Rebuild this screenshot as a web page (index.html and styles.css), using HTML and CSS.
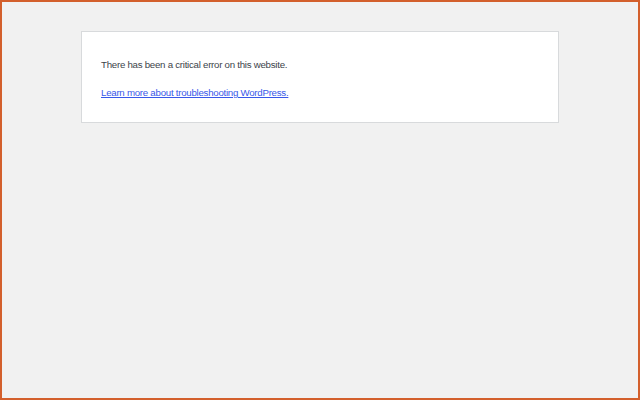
FILE: index.html
```html
<!DOCTYPE html>
<html>
<head>
<meta charset="utf-8">
<link rel="stylesheet" href="styles.css">
</head>
<body>
<div class="frame">
  <div class="card">
    <p class="msg">There has been a critical error on this website.</p>
    <p class="msg"><a href="#">Learn more about troubleshooting WordPress.</a></p>
  </div>
</div>
</body>
</html>
```
FILE: styles.css
```css
html, body { margin: 0; padding: 0; }
.frame {
  box-sizing: border-box;
  width: 640px;
  height: 400px;
  border: 2px solid #d35f2c;
  background: #f1f1f1;
  padding: 29px 0 0 79px;
}
.card {
  box-sizing: border-box;
  width: 478px;
  height: 92px;
  background: #fff;
  border: 1px solid #d8dadc;
  padding: 26px 19px 0 19px;
  font-family: "Liberation Sans", Arial, sans-serif;
  font-size: 9.7px;
  letter-spacing: -0.26px;
  color: #3c434a;
}
.msg { margin: 0 0 14px 0; line-height: 14px; }
.msg a { color: #3858e9; text-decoration: underline; }
```
